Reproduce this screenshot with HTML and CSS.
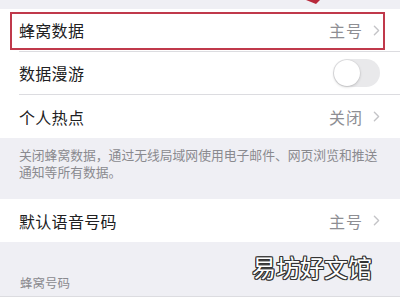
FILE: index.html
```html
<!DOCTYPE html>
<html lang="zh">
<head>
<meta charset="utf-8">
<link rel="stylesheet" href="styles.css">
</head>
<body>
<div class="page">
  <div class="topband"></div>
  <div class="group">
    <div class="row">
      <span class="label">蜂窝数据</span>
      <span class="value">主号<svg class="chev" viewBox="0 0 8 13" width="7" height="11"><path d="M1.5 1.5 L6.5 6.5 L1.5 11.5" fill="none" stroke="#c4c4c7" stroke-width="1.6" stroke-linecap="round" stroke-linejoin="round"/></svg></span>
    </div>
    <div class="row">
      <span class="label">数据漫游</span>
      <span class="toggle"><span class="knob"></span></span>
    </div>
    <div class="row last">
      <span class="label">个人热点</span>
      <span class="value">关闭<svg class="chev" viewBox="0 0 8 13" width="7" height="11"><path d="M1.5 1.5 L6.5 6.5 L1.5 11.5" fill="none" stroke="#c4c4c7" stroke-width="1.6" stroke-linecap="round" stroke-linejoin="round"/></svg></span>
    </div>
  </div>
  <div class="note">关闭蜂窝数据，通过无线局域网使用电子邮件、网页浏览和推送通知等所有数据。</div>
  <div class="group">
    <div class="row last">
      <span class="label">默认语音号码</span>
      <span class="value">主号<svg class="chev" viewBox="0 0 8 13" width="7" height="11"><path d="M1.5 1.5 L6.5 6.5 L1.5 11.5" fill="none" stroke="#c4c4c7" stroke-width="1.6" stroke-linecap="round" stroke-linejoin="round"/></svg></span>
    </div>
  </div>
  <div class="header">蜂窝号码</div>
  <div class="group tail"></div>

  <div class="highlight"></div>
  <svg class="arrow" viewBox="0 0 20 6" width="20" height="6"><path d="M4 0 L18 0 L14 4 Z" fill="#b8283a"/></svg>
  <div class="watermark">易坊好文馆</div>
</div>
</body>
</html>
```
FILE: styles.css
```css
* { box-sizing: border-box; }
html, body { margin: 0; padding: 0; }
body {
  width: 400px;
  height: 300px;
  overflow: hidden;
  background: #efeff4;
  font-family: "Noto Sans CJK SC", "Noto Sans", sans-serif;
}
.page { position: relative; width: 400px; height: 300px; }
.topband { height: 9px; background: #efeff4; }
.group { background: #fff; padding-left: 19px; }
.row {
  height: 43px;
  display: flex;
  align-items: center;
  justify-content: space-between;
  padding-right: 20px;
  border-bottom: 1px solid #dcdce0;
}
.row.last { border-bottom: none; }
.label { font-size: 16px; color: #202022; letter-spacing: 0.3px; }
.value {
  display: flex;
  align-items: center;
  gap: 10px;
  font-size: 16px;
  color: #8e8e93;
  letter-spacing: 1px;
}
.chev { display: block; }
.toggle {
  width: 47px;
  height: 28px;
  border-radius: 14px;
  background: #e9e9eb;
  display: flex;
  align-items: center;
  padding-left: 1px;
}
.knob {
  width: 26px;
  height: 26px;
  border-radius: 50%;
  background: #fff;
  box-shadow: 0 1px 3px rgba(0,0,0,0.18), 0 0 0 0.5px rgba(0,0,0,0.06);
}
.note {
  height: 61px;
  padding: 8px 15px 0 19px;
  font-size: 12.8px;
  line-height: 17px;
  color: #8a8a8f;
}
.header {
  height: 54px;
  padding: 32px 0 0 20px;
  font-size: 12.5px;
  line-height: 17px;
  color: #8a8a8f;
}
.group.tail { height: 4px; border-top: 1px solid #dcdce0; }
.highlight {
  position: absolute;
  left: 10px;
  top: 12px;
  width: 375px;
  height: 38px;
  border: 2px solid #c0394b;
}
.arrow { position: absolute; left: 302px; top: 0; }
.watermark {
  position: absolute;
  left: 252px;
  top: 251px;
  font-size: 24px;
  line-height: 32px;
  color: #fff;
  text-shadow: -1px -1px 0 #333, 1px -1px 0 #333, -1px 1px 0 #333, 1px 1px 0 #333, 0 1px 0 #333, 0 -1px 0 #333, 1px 0 0 #333, -1px 0 0 #333;
}
```
